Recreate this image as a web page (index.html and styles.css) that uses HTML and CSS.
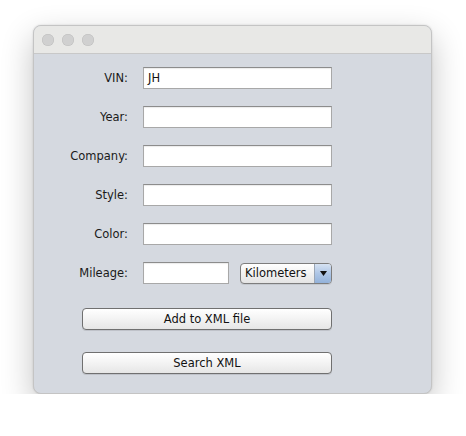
FILE: index.html
```html
<!DOCTYPE html>
<html>
<head>
<meta charset="utf-8">
<link rel="stylesheet" href="styles.css">
</head>
<body>
<div class="window">
  <div class="titlebar">
    <span class="light"></span><span class="light"></span><span class="light"></span>
  </div>
  <div class="content">
    <div class="form">
      <label class="lbl">VIN:</label>
      <div class="field"><div class="input">JH</div></div>
      <label class="lbl">Year:</label>
      <div class="field"><div class="input"></div></div>
      <label class="lbl">Company:</label>
      <div class="field"><div class="input"></div></div>
      <label class="lbl">Style:</label>
      <div class="field"><div class="input"></div></div>
      <label class="lbl">Color:</label>
      <div class="field"><div class="input"></div></div>
      <label class="lbl">Mileage:</label>
      <div class="field mileage">
        <div class="input short"></div>
        <div class="combo">
          <span class="combo-text">Kilometers</span>
          <span class="combo-arrow"><svg width="7" height="5" viewBox="0 0 7 5"><path d="M0 0H7L3.5 5Z" fill="#111"/></svg></span>
        </div>
      </div>
    </div>
    <div class="buttons">
      <div class="btn">Add to XML file</div>
      <div class="btn">Search XML</div>
    </div>
  </div>
</div>
</body>
</html>
```

FILE: styles.css
```css
html, body {
  margin: 0;
  padding: 0;
  background: #ffffff;
}
body {
  font-family: "DejaVu Sans", "Open Sans", sans-serif;
  font-size: 11.5px;
  color: #111;
}
.window {
  margin: 25px 0 0 33px;
  width: 399px;
  height: 369px;
  box-sizing: border-box;
  border: 1px solid #c4c4c4;
  border-radius: 8px;
  overflow: hidden;
  background: #d5d9e0;
  box-shadow: 0 12px 32px rgba(0,0,0,0.24), 0 0 2px rgba(0,0,0,0.15);
  display: flex;
  flex-direction: column;
}
.titlebar {
  height: 27px;
  background: #e8e8e6;
  border-bottom: 1px solid #c8c8c8;
  display: flex;
  align-items: center;
  gap: 8px;
  padding-left: 8px;
  flex-shrink: 0;
}
.light {
  width: 12px;
  height: 12px;
  border-radius: 50%;
  background: #d0d0d0;
  box-shadow: inset 0 0 0 0.5px #bdbdbd;
}
.content {
  padding-top: 13px;
  display: flex;
  flex-direction: column;
}
.form {
  display: grid;
  grid-template-columns: 94px 189px;
  column-gap: 15px;
  row-gap: 17px;
}
.lbl {
  text-align: right;
  align-self: center;
  color: #1a1a1a;
  line-height: 22px;
  height: 22px;
}
.field {
  height: 22px;
  display: flex;
}
.input {
  width: 189px;
  height: 22px;
  box-sizing: border-box;
  background: #fff;
  border: 1px solid #a8a8a8;
  border-top-color: #8c8c8c;
  box-shadow: inset 0 1px 1px rgba(0,0,0,0.08);
  padding-left: 4px;
  line-height: 20px;
  color: #111;
}
.input.short {
  width: 86px;
}
.mileage {
  gap: 11px;
  align-items: center;
}
.combo {
  width: 92px;
  height: 21px;
  box-sizing: border-box;
  border: 1px solid #7d7d7d;
  border-radius: 4px;
  background: linear-gradient(#ffffff, #f2f2f2 50%, #e4e4e4);
  display: flex;
  overflow: hidden;
  box-shadow: 0 1px 0 rgba(0,0,0,0.08);
}
.combo-text {
  flex: 1;
  padding-left: 4px;
  line-height: 19px;
  color: #111;
}
.combo-arrow {
  width: 16px;
  border-left: 1px solid #9aa6b6;
  background: linear-gradient(#d6e2f2, #aec6e6 50%, #93b2da);
  display: flex;
  align-items: center;
  justify-content: center;
}
.buttons {
  padding-left: 48px;
  padding-top: 24px;
  display: flex;
  flex-direction: column;
  gap: 22px;
}
.btn {
  width: 250px;
  height: 22px;
  box-sizing: border-box;
  border: 1px solid #707070;
  border-radius: 4px;
  background: linear-gradient(#ffffff, #f3f3f3 50%, #e6e6e6);
  box-shadow: 0 1px 0 rgba(0,0,0,0.1);
  text-align: center;
  line-height: 20px;
  color: #111;
}
```
